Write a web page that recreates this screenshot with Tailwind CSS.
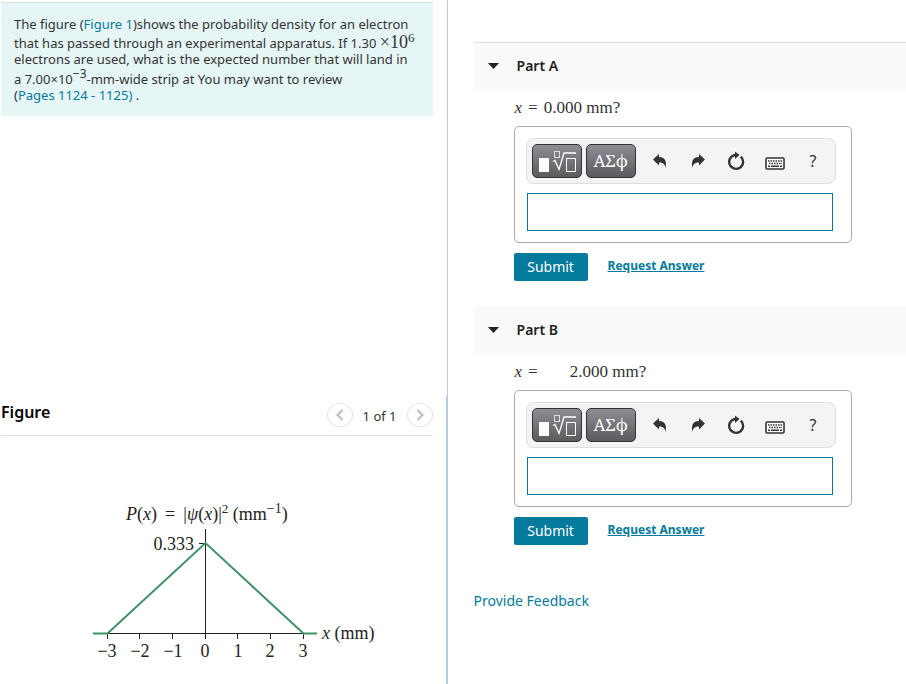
<!DOCTYPE html>
<html lang="en">
  <head>
    <meta charset="UTF-8" />
    <meta name="viewport" content="width=device-width, initial-scale=1.0" />
    <title>Probability density</title>
    <script src="https://cdn.jsdelivr.net/npm/@tailwindcss/browser@4"></script>
  </head>
  <body class="bg-white font-['Noto_Sans','Open_Sans',sans-serif] text-[#333]">
    <!-- shared icons -->
    <svg class="hidden">
      <symbol id="template" viewBox="0 0 38 24">
        <rect x="1" y="9" width="10" height="14" fill="#fff" />
        <g fill="none" stroke="#fff">
          <rect x="16.5" y="2.5" width="5" height="6" stroke="#ddd" />
          <path d="M15 12.500l2-1 4 9 5-16.500h12" stroke-width="1.300" />
          <rect x="28.500" y="9.500" width="9" height="13" />
        </g>
      </symbol>
      <symbol id="undo" viewBox="0 0 16 16">
        <path fill="#333" d="M1 6.500 7 1v3c6 .2 8 4 6.500 11C13 11 11 9.500 7 9.500v3z" />
      </symbol>
      <symbol id="reset" viewBox="0 0 18 20">
        <path fill="none" stroke="#333" stroke-width="2.400" d="M5 5.200A7 7 0 1 0 13.800 5.600M5 5.200Q7 4 9.500 4" />
        <path fill="#333" d="M8 .5 12.500 4 8 8z" />
      </symbol>
      <symbol id="keyboard" viewBox="0 0 20 13">
        <rect x="1" y="1" width="18" height="11" rx="1" fill="#fff" stroke="#333" stroke-width="1.600" />
        <path stroke="#333" stroke-width="1.500" stroke-dasharray="1.500 1" d="M3 4h14M4 6.500h13" />
        <path stroke="#333" stroke-width="1.500" d="M3 9.200h2M6 9.200h8M15 9.200h2" />
      </symbol>
    </svg>

    <main class="flex min-h-screen">
      <section class="relative flex w-[49.4%] flex-col border-r border-[#b9cadf] pr-[14px]">
        <div class="mt-[2px] ml-px border-t border-[#d8dcdc] bg-[#e6f6f7] p-[13px] text-[13px] leading-4 whitespace-nowrap">
          <p>
            <span class="block">The figure (<a href="#figure" class="text-[#047a9c]">Figure 1</a>)shows the probability density for an electron</span>
            <span class="block pt-px">that has passed through an experimental apparatus. If 1.30 <span class="font-['Liberation_Serif',serif] text-[18px] leading-none">×10<sup class="text-[13px]">6</sup></span></span>
            <span class="block">electrons are used, what is the expected number that will land in</span>
            <span class="block pt-[4px]">a 7.00×10<sup class="text-[12px]">−3</sup>-mm-wide strip at You may want to review</span>
            <span class="block">(<a href="#pages" class="text-[#047a9c]">Pages 1124 - 1125)</a> .</span>
          </p>
        </div>

        <div id="figure" class="mt-[284px] ml-px flex h-9 items-start justify-between border-b border-[#ddd]">
          <h2 class="text-base leading-6 font-semibold text-black">Figure</h2>
          <div class="flex items-center gap-[10px] pt-[3px] text-[13px]">
            <button type="button" aria-label="Previous" class="flex h-6 w-[26px] items-center justify-center rounded-[50%] border border-[#e4e4e4]">
              <svg class="h-3 w-2" viewBox="0 0 8 12" fill="none" stroke="#bbb" stroke-width="2"><path d="M6.500 1 1.500 6l5 5" /></svg>
            </button>
            <span class="pt-[3px]">1 of 1</span>
            <button type="button" aria-label="Next" class="flex h-6 w-[26px] items-center justify-center rounded-[50%] border border-[#e4e4e4]">
              <svg class="h-3 w-2" viewBox="0 0 8 12" fill="none" stroke="#bbb" stroke-width="2"><path d="M1.500 1l5 5-5 5" /></svg>
            </button>
          </div>
        </div>

        <!-- probability density graph -->
        <svg class="mt-[60px] ml-[85px] w-[300px] shrink-0 font-['Liberation_Serif',serif] text-[18px]" viewBox="0 0 300 170" height="170" fill="#222">
          <text x="41" y="24"><tspan font-style="italic">P</tspan>(<tspan font-style="italic">x</tspan>)&thinsp; = &thinsp;|<tspan font-style="italic">ψ</tspan>(<tspan font-style="italic">x</tspan>)|<tspan font-size="13" dy="-7">2</tspan><tspan dy="7"> (mm</tspan><tspan font-size="14" dy="-7">−1</tspan><tspan dy="7">)</tspan></text>
          <text x="109" y="54" text-anchor="end">0.333</text>
          <path stroke="#222" fill="none" d="M22 137.500h196M120.500 33v110M114 47.500h6M22.500 138v5M54.500 138v5M87.500 138v5M152.500 138v5M185.500 138v5M218.500 138v5" />
          <path stroke="#3f9166" stroke-width="2" fill="none" d="M8 137.500h14.500L120.500 47l98 90.500H232" />
          <text x="237" y="143"><tspan font-style="italic">x</tspan> (mm)</text>
          <g text-anchor="middle">
            <text x="22" y="161">−3</text>
            <text x="55" y="161">−2</text>
            <text x="88" y="161">−1</text>
            <text x="120" y="161">0</text>
            <text x="153" y="161">1</text>
            <text x="185" y="161">2</text>
            <text x="218" y="161">3</text>
          </g>
        </svg>
        <div class="absolute top-[396px] right-0 bottom-0 w-px bg-[#b9cadf]"></div>
      </section>

      <section class="flex-1 pt-[42px] pl-[26px]">
        <article>
          <h2 class="flex h-[47px] items-center gap-[18px] border-t border-[#ddd] bg-[#f9f9f9] pl-[14px] text-sm font-semibold text-[#222]">
            <svg class="h-[6px] w-[11px]" viewBox="0 0 11 6"><path d="M0 0h11L5.500 6z" fill="#222" /></svg>
            Part A
          </h2>
          <div class="ml-10 mr-[54px]">
            <label for="answer-a" class="flex h-[37px] items-center gap-[6px] pl-px font-['Liberation_Serif',serif] text-[17px]"><i>x</i> = <span>0.000 mm?</span></label>
            <div class="rounded-[5px] border border-[#aaa] py-[11px] pr-[15px] pl-[11px]">
              <div class="flex h-[46px] items-center rounded-lg border border-[#ddd] bg-[#f4f4f4] pl-[5px] pr-[3px]">
                <button type="button" aria-label="Templates" class="mr-1 flex h-[34px] w-[50px] items-center justify-center rounded-[5px] border border-[#333] bg-gradient-to-b from-[#8e8d94] to-[#5c5c5f]"><svg class="h-6 w-[38px]"><use href="#template" /></svg></button>
                <button type="button" class="h-[34px] w-[50px] rounded-[5px] border border-[#333] bg-gradient-to-b from-[#8e8d94] to-[#5c5c5f] font-['Noto_Serif','Liberation_Serif',serif] text-[17px] text-white">ΑΣϕ</button>
                <div class="ml-[5px] flex flex-1 items-center justify-between">
                  <button type="button" aria-label="Undo" class="flex h-6 w-[38px] items-center justify-center"><svg class="size-4"><use href="#undo" /></svg></button>
                  <button type="button" aria-label="Redo" class="flex h-6 w-[38px] items-center justify-center"><svg class="size-4 -scale-x-100"><use href="#undo" /></svg></button>
                  <button type="button" aria-label="Reset" class="flex h-6 w-[38px] items-center justify-center"><svg class="h-5 w-[18px]"><use href="#reset" /></svg></button>
                  <button type="button" aria-label="Keyboard" class="flex h-6 w-[38px] items-center justify-center pt-1"><svg class="h-[13px] w-5"><use href="#keyboard" /></svg></button>
                  <button type="button" class="h-6 w-[38px] text-base leading-6">?</button>
                </div>
              </div>
              <input id="answer-a" type="text" class="mx-px mt-[9px] block h-[38px] w-[calc(100%-4px)] border border-[#047a9c] bg-white px-2 outline-none" />
            </div>
            <div class="mt-[10px] flex items-center gap-5">
              <button type="submit" class="h-7 w-[74px] rounded-xs bg-[#047a9c] text-sm text-white">Submit</button>
              <a href="#request-a" class="pb-[2px] text-xs font-bold text-[#047a9c] underline">Request Answer</a>
            </div>
          </div>
        </article>

        <article class="mt-[26px]">
          <h2 class="flex h-[46px] items-center gap-[18px] bg-[#f9f9f9] pl-[14px] text-sm font-semibold text-[#222]">
            <svg class="h-[6px] w-[11px]" viewBox="0 0 11 6"><path d="M0 0h11L5.500 6z" fill="#222" /></svg>
            Part B
          </h2>
          <div class="ml-10 mr-[54px]">
            <label for="answer-b" class="flex h-[37px] items-center gap-[6px] pl-px font-['Liberation_Serif',serif] text-[17px]"><i>x</i> = <span class="pl-[26px]">2.000 mm?</span></label>
            <div class="rounded-[5px] border border-[#aaa] py-[11px] pr-[15px] pl-[11px]">
              <div class="flex h-[46px] items-center rounded-lg border border-[#ddd] bg-[#f4f4f4] pl-[5px] pr-[3px]">
                <button type="button" aria-label="Templates" class="mr-1 flex h-[34px] w-[50px] items-center justify-center rounded-[5px] border border-[#333] bg-gradient-to-b from-[#8e8d94] to-[#5c5c5f]"><svg class="h-6 w-[38px]"><use href="#template" /></svg></button>
                <button type="button" class="h-[34px] w-[50px] rounded-[5px] border border-[#333] bg-gradient-to-b from-[#8e8d94] to-[#5c5c5f] font-['Noto_Serif','Liberation_Serif',serif] text-[17px] text-white">ΑΣϕ</button>
                <div class="ml-[5px] flex flex-1 items-center justify-between">
                  <button type="button" aria-label="Undo" class="flex h-6 w-[38px] items-center justify-center"><svg class="size-4"><use href="#undo" /></svg></button>
                  <button type="button" aria-label="Redo" class="flex h-6 w-[38px] items-center justify-center"><svg class="size-4 -scale-x-100"><use href="#undo" /></svg></button>
                  <button type="button" aria-label="Reset" class="flex h-6 w-[38px] items-center justify-center"><svg class="h-5 w-[18px]"><use href="#reset" /></svg></button>
                  <button type="button" aria-label="Keyboard" class="flex h-6 w-[38px] items-center justify-center pt-1"><svg class="h-[13px] w-5"><use href="#keyboard" /></svg></button>
                  <button type="button" class="h-6 w-[38px] text-base leading-6">?</button>
                </div>
              </div>
              <input id="answer-b" type="text" class="mx-px mt-[9px] block h-[38px] w-[calc(100%-4px)] border border-[#047a9c] bg-white px-2 outline-none" />
            </div>
            <div class="mt-[10px] flex items-center gap-5">
              <button type="submit" class="h-7 w-[74px] rounded-xs bg-[#047a9c] text-sm text-white">Submit</button>
              <a href="#request-b" class="pb-[2px] text-xs font-bold text-[#047a9c] underline">Request Answer</a>
            </div>
          </div>
        </article>

        <a href="#feedback" class="mt-[46px] inline-block text-sm text-[#047a9c]">Provide Feedback</a>
      </section>
    </main>
  </body>
</html>
